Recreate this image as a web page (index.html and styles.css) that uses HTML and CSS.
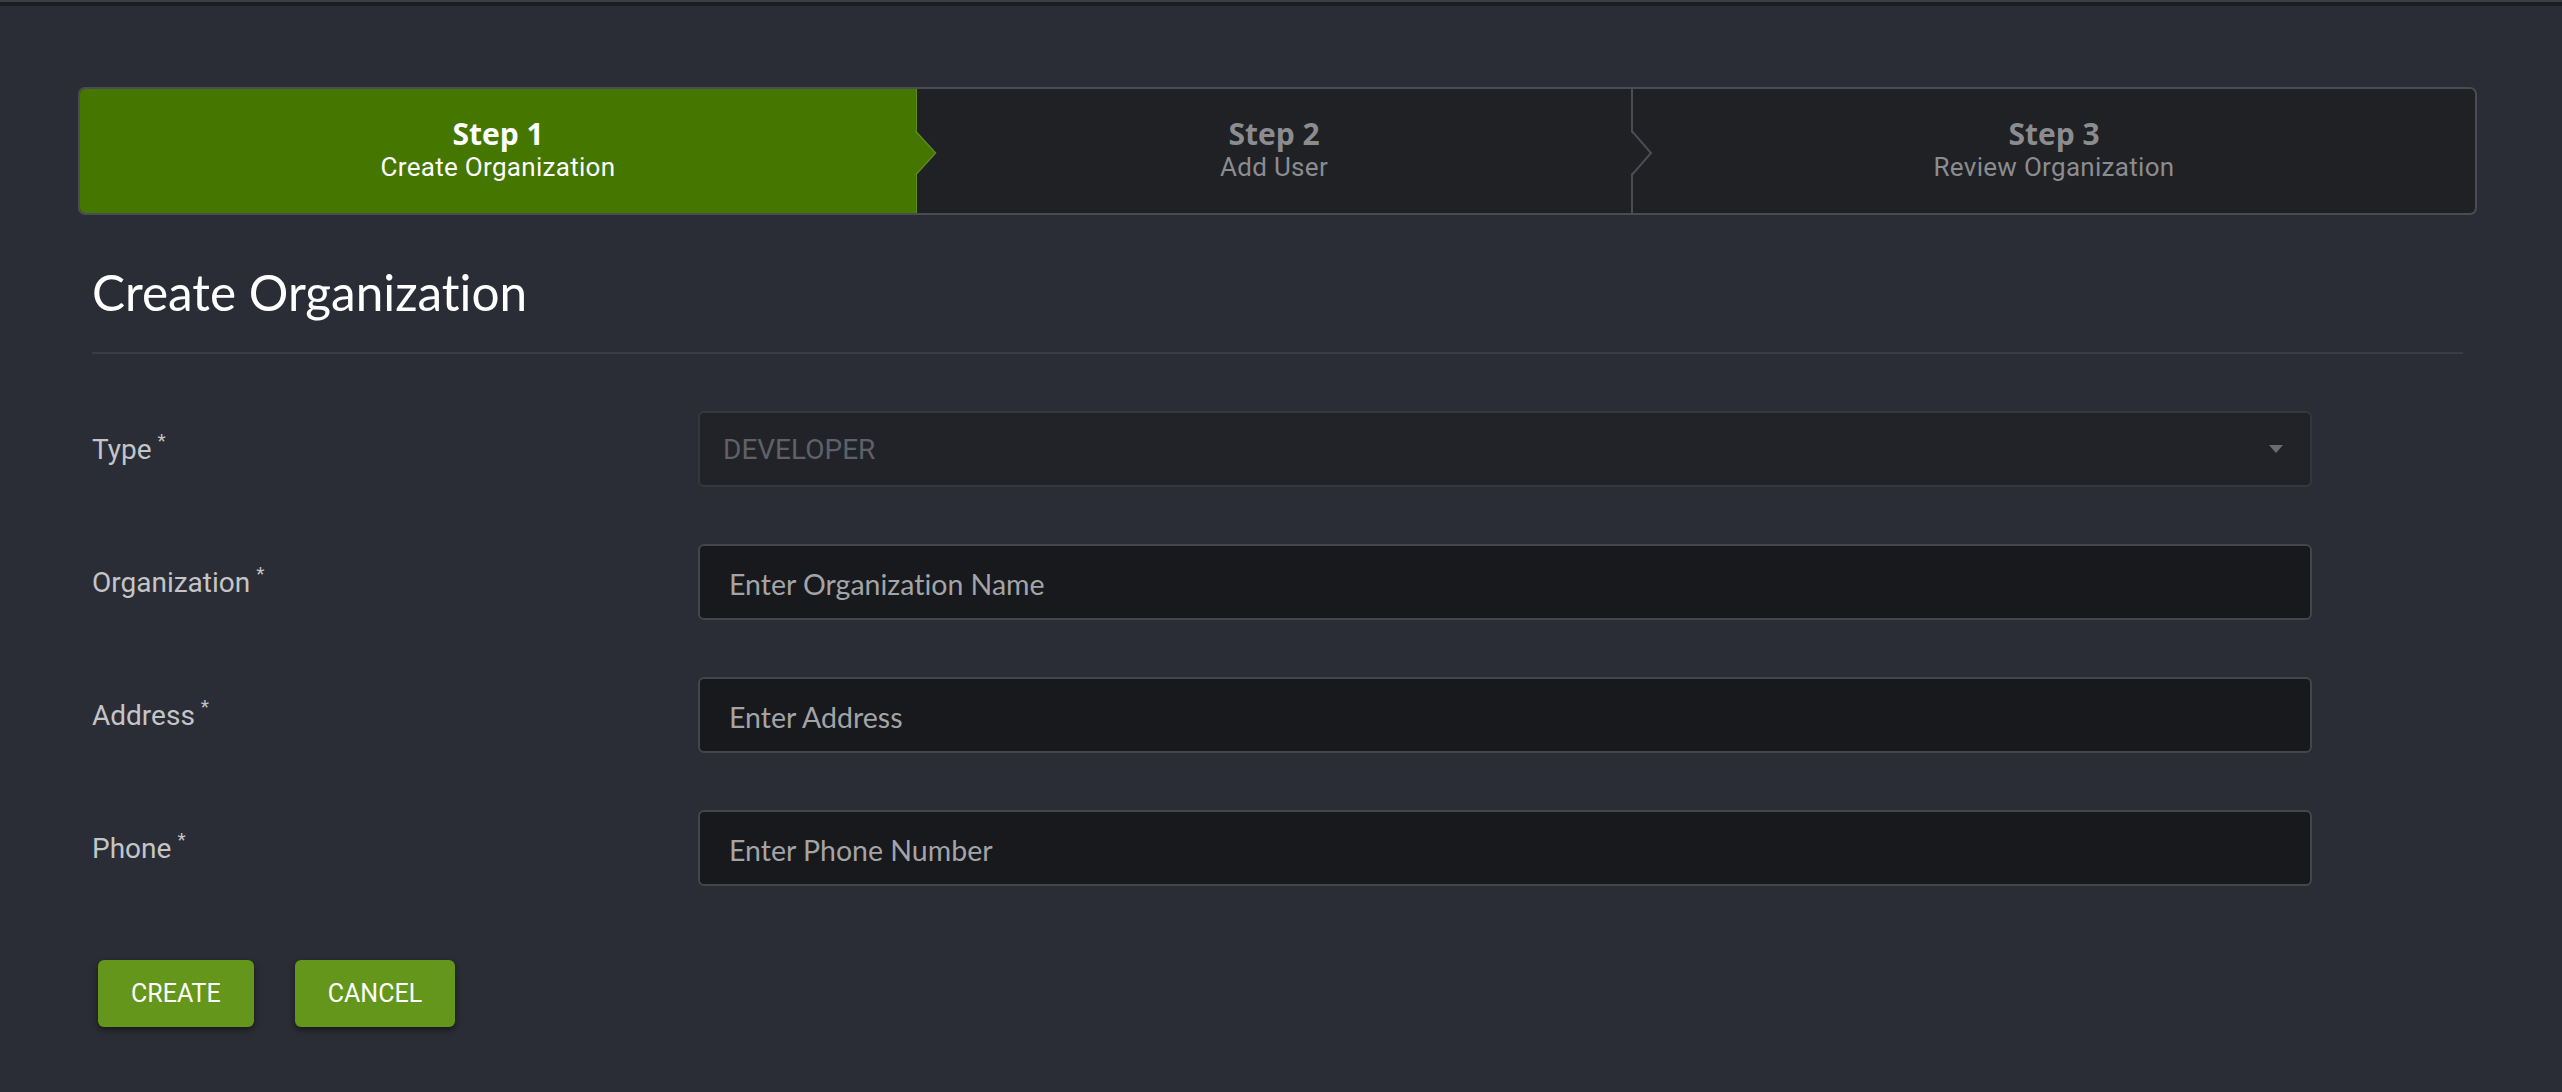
FILE: index.html
```html
<!DOCTYPE html>
<html lang="en">
<head>
<meta charset="utf-8">
<title>Create Organization</title>
<link rel="stylesheet" href="styles.css">
</head>
<body>
<div class="topbar"></div>
<main class="page">
  <div class="stepper">
    <div class="step step-active">
      <div class="step-title">Step 1</div>
      <div class="step-sub">Create Organization</div>
      <svg class="chev chev-active" width="22" height="44" viewBox="0 0 22 44"><polygon points="0,0 20,22 0,44" fill="#457600"/><polyline points="0.5,0 20.5,22 0.5,44" fill="none" stroke="#5e8c22" stroke-width="1.5"/></svg>
    </div>
    <div class="step step-mid">
      <div class="step-title">Step 2</div>
      <div class="step-sub">Add User</div>
      <svg class="chev chev-grey" width="24" height="44" viewBox="0 0 24 44"><polygon points="0,0 21,22 0,44" fill="#202125"/><polyline points="1,-1 21,22 1,45" fill="none" stroke="#4b4d53" stroke-width="2"/></svg>
    </div>
    <div class="step step-last">
      <div class="step-title">Step 3</div>
      <div class="step-sub">Review Organization</div>
    </div>
  </div>

  <section class="content">
    <h1 class="heading">Create Organization</h1>
    <form class="form">
      <div class="row">
        <label class="label">Type<span class="req">*</span></label>
        <div class="select"><span class="select-value">DEVELOPER</span><span class="caret"></span></div>
      </div>
      <div class="row">
        <label class="label">Organization<span class="req">*</span></label>
        <input class="input" type="text" placeholder="Enter Organization Name">
      </div>
      <div class="row">
        <label class="label">Address<span class="req">*</span></label>
        <input class="input" type="text" placeholder="Enter Address">
      </div>
      <div class="row">
        <label class="label">Phone<span class="req">*</span></label>
        <input class="input" type="text" placeholder="Enter Phone Number">
      </div>
      <div class="actions">
        <button type="button" class="btn">CREATE</button>
        <button type="button" class="btn">CANCEL</button>
      </div>
    </form>
  </section>
</main>
</body>
</html>
```
FILE: styles.css
```css
html, body {
  margin: 0;
  padding: 0;
}
body {
  background: #2a2d35;
  font-family: Roboto, "Liberation Sans", sans-serif;
  color: #fff;
  height: 1092px;
  overflow: hidden;
  font-variant-ligatures: none;
}
.topbar {
  height: 4px;
  border-top: 2px solid #3c3f47;
  background: #1c1d21;
}
.page {
  padding: 81px 85px 0 78px;
}

/* Stepper */
.stepper {
  display: flex;
  height: 124px;
  border: 2px solid #4a4c53;
  border-radius: 7px;
  background: #202125;
}
.step {
  position: relative;
  display: flex;
  flex-direction: column;
  align-items: center;
  justify-content: center;
  padding-bottom: 2px;
}
.step-active {
  width: 837px;
  background: #457600;
  border-radius: 5px 0 0 5px;
  border-right: 1px solid #5e8c22;
  box-sizing: border-box;
  z-index: 2;
}
.step-mid {
  width: 714px;
  border-right: 2px solid #4b4d53;
  z-index: 1;
}
.step-last {
  flex: 1;
}
.step-title {
  font-family: "Open Sans", "Noto Sans", sans-serif;
  font-weight: 700;
  font-size: 30px;
  line-height: 30px;
  color: #8b8c90;
}
.step-sub {
  font-family: Roboto, sans-serif;
  font-size: 26px;
  line-height: 30px;
  margin-top: 3px;
  letter-spacing: 0.3px;
  color: #8b8c90;
}
.step-active .step-title,
.step-active .step-sub {
  color: #fff;
}
.chev {
  position: absolute;
  top: 42px;
  display: block;
}
.chev-active {
  right: -21px;
}
.chev-grey {
  right: -23px;
}

/* Content */
.content {
  padding: 0 14px 0 14px;
}
.heading {
  margin: 47px 0 0 0;
  padding-bottom: 30px;
  border-bottom: 2px solid #3a3d45;
  font-family: Lato, "Open Sans", sans-serif;
  font-weight: 400;
  font-size: 49.5px;
  line-height: normal;
  color: #fff;
}
.form {
  margin-top: 57px;
  display: flex;
  flex-direction: column;
  gap: 57px;
}
.row {
  display: grid;
  grid-template-columns: 606px 1614px;
  align-items: center;
}
.label {
  font-family: Roboto, sans-serif;
  font-size: 28px;
  color: #c4c5c8;
}
.req {
  font-size: 19px;
  margin-left: 6px;
  position: relative;
  top: -12px;
}
.select,
.input {
  box-sizing: border-box;
  height: 76px;
  border-radius: 6px;
  margin: 0;
}
.select {
  position: relative;
  display: flex;
  align-items: center;
  background: #222328;
  border: 2px solid #35373d;
  padding: 0 0 0 23px;
}
.select-value {
  font-family: Roboto, sans-serif;
  font-size: 28px;
  color: #5f6166;
}
.caret {
  margin-left: auto;
  margin-right: 27px;
  width: 0;
  height: 0;
  border-left: 7px solid transparent;
  border-right: 7px solid transparent;
  border-top: 8px solid #6a6c71;
}
.input {
  display: block;
  width: 100%;
  background: #18191c;
  border: 2px solid #44464b;
  padding: 3px 0 0 29px;
  font-family: Lato, sans-serif;
  font-size: 28.5px;
  font-variant-ligatures: none;
  color: #e0e0e0;
  outline: none;
}
.input::placeholder {
  color: #a3a4a8;
  opacity: 1;
}
.actions {
  display: flex;
  gap: 41px;
  margin-top: 17px;
  padding-left: 6px;
}
.btn {
  height: 67px;
  padding: 0 33px;
  border: none;
  border-radius: 6px;
  background: #63961a;
  color: #fff;
  font-family: Roboto, sans-serif;
  font-size: 25px;
  font-weight: 400;
  box-shadow: 0 3px 6px rgba(0, 0, 0, 0.45);
  cursor: pointer;
}
```
